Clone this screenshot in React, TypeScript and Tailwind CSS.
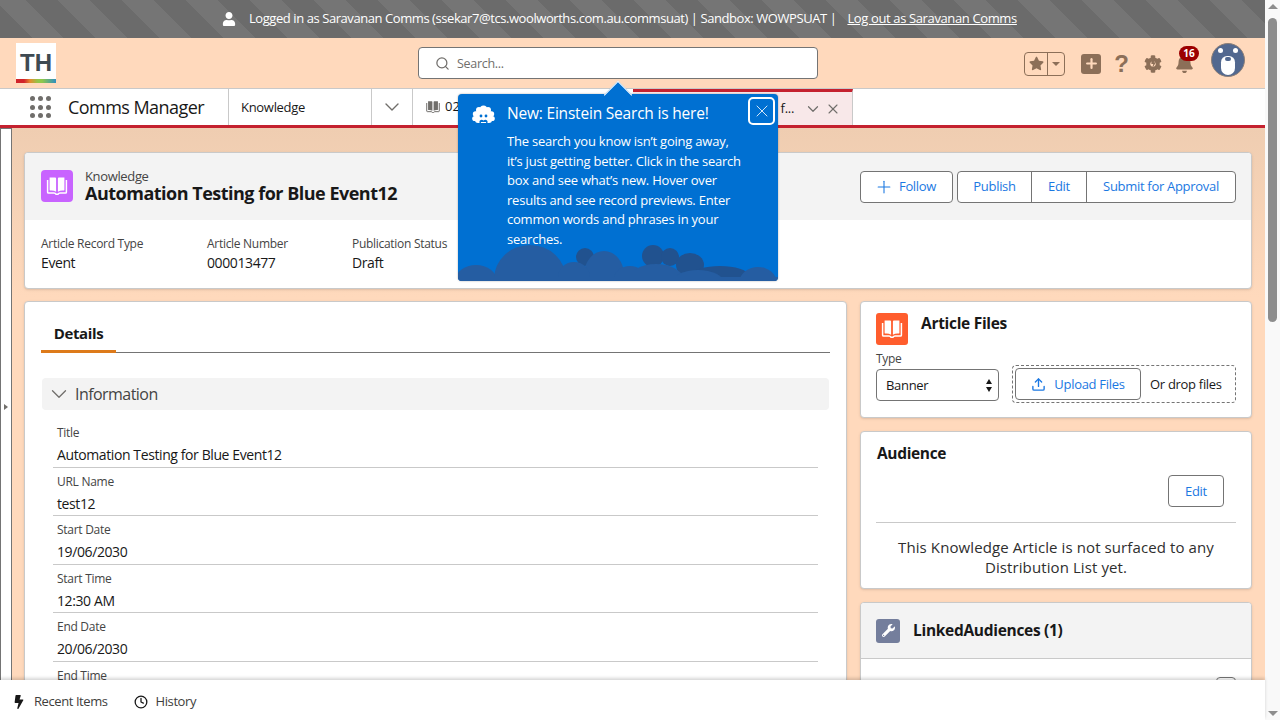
import React from "react";
import { Search, ChevronDown, X, Plus, Upload, Clock } from "lucide-react";
import { FaStar, FaBell, FaBolt, FaWrench, FaCog, FaUser } from "react-icons/fa";

function BookIcon({ size = 24 }: { size?: number }) {
  return (
    <svg width={size} height={size} viewBox="0 0 24 24" fill="none">
      <path d="M4.6 3.5h5.6c.5 0 .9.4.9.9v13.4c-1.4-.8-3-1.2-4.6-1.2H5.5a.9.9 0 0 1-.9-.9V3.5z" fill="currentColor" />
      <path d="M19.4 3.5h-5.6c-.5 0-.9.4-.9.9v13.4c1.4-.8 3-1.2 4.6-1.2h1c.5 0 .9-.4.9-.9V3.5z" fill="currentColor" />
      <path d="M2.6 6v12.2c0 .5.4.8.9.8H9c1 0 1.6.4 2 1.2h2c.4-.8 1-1.2 2-1.2h5.5c.5 0 .9-.3.9-.8V6" stroke="currentColor" strokeWidth="1.5" fill="none" />
    </svg>
  );
}

function Einstein() {
  return (
    <svg width="23" height="20" viewBox="0 0 23 20">
      <g fill="#fff">
        <circle cx="11.5" cy="4" r="3.6" />
        <circle cx="7" cy="5" r="3" />
        <circle cx="16" cy="5" r="3" />
        <circle cx="3.6" cy="9" r="2.8" />
        <circle cx="19.4" cy="9" r="2.8" />
        <circle cx="2.8" cy="13.5" r="2.6" />
        <circle cx="20.2" cy="13.5" r="2.6" />
        <rect x="3" y="6" width="17" height="12" rx="3" />
      </g>
      <circle cx="9" cy="11" r="1.4" fill="#0070d2" />
      <circle cx="14" cy="11" r="1.4" fill="#0070d2" />
      <path d="M7.5 16c1.4-1.6 2.8-1.3 4-.6 1.2-.7 2.6-1 4 .6v2h-1.4v-1h-5.2v1H7.5z" fill="#0070d2" />
    </svg>
  );
}

function Clouds() {
  return (
    <svg className="absolute bottom-0 left-0" width="320" height="40" viewBox="0 0 320 40">
      <g fill="#21528f">
        <circle cx="127" cy="16" r="9" />
        <circle cx="195" cy="15" r="11" />
        <circle cx="212" cy="16" r="9" />
        <ellipse cx="232" cy="24" rx="14" ry="12" />
        <ellipse cx="262" cy="34" rx="28" ry="9" />
      </g>
      <g fill="#255da2">
        <ellipse cx="18" cy="40" rx="21" ry="16" />
        <ellipse cx="72" cy="38" rx="36" ry="34" />
        <ellipse cx="146" cy="34" rx="20" ry="24" />
        <ellipse cx="116" cy="36" rx="16" ry="15" />
        <ellipse cx="172" cy="38" rx="16" ry="13" />
        <ellipse cx="198" cy="40" rx="28" ry="17" />
        <ellipse cx="240" cy="42" rx="26" ry="13" />
        <ellipse cx="300" cy="42" rx="19" ry="16" />
        <rect x="0" y="36" width="320" height="4" />
      </g>
    </svg>
  );
}

function Field({ label, value }: { label: string; value: string }) {
  return (
    <div className="h-[48.5px] px-1 border-b border-[#c9c9c9] flex flex-col">
      <span className="text-[12px] leading-[18px] text-[#444] mt-[5px] tracking-[-0.28px]">{label}</span>
      <span className="text-[14px] leading-[20px] text-[#181818] mt-[3px] tracking-[-0.4px]">{value}</span>
    </div>
  );
}

function Stat({ label, value, w }: { label: string; value: string; w: string }) {
  return (
    <div className={`${w} flex flex-col`}>
      <span className="text-[12px] leading-[18px] text-[#444] tracking-[-0.29px]">{label}</span>
      <span className="text-[14px] leading-[20px] text-[#181818] tracking-[-0.4px]">{value}</span>
    </div>
  );
}

export default function App() {
  return (
    <div className="relative h-screen w-full overflow-hidden flex font-['Open_Sans','Noto_Sans',sans-serif] text-[#181818] bg-[#ffd9bc]">
      <div className="flex-1 min-w-0 flex flex-col">
        {/* Login banner */}
        <div className="h-[38px] shrink-0 flex items-center bg-[#6c6c6c] bg-[repeating-linear-gradient(45deg,#6b6b6b_0,#6b6b6b_22.63px,#757575_22.63px,#757575_45.25px)] text-white text-[13px] pl-[222px]">
          <FaUser size={14} className="mr-[13px]" />
          <span className="tracking-[-0.43px]">Logged in as Saravanan Comms (ssekar7@tcs.woolworths.com.au.commsuat) | Sandbox: WOWPSUAT |</span>
          <span className="ml-[11px] underline tracking-[-0.37px]">Log out as Saravanan Comms</span>
        </div>

        {/* Global header */}
        <div className="h-[50px] shrink-0 bg-[#ffd9bc] flex items-center relative">
          <div className="ml-4 w-10 h-10 bg-white flex flex-col">
            <div className="flex-1 flex items-center justify-center pt-[3px] font-bold text-[24px] leading-none text-[#3e4a52] font-['Liberation_Sans',sans-serif]">TH</div>
            <div className="h-1 bg-[linear-gradient(90deg,#d1232a_0%,#d1232a_20%,#e58a2d_35%,#8fc74a_55%,#8fc74a_65%,#2f8fc0_100%)]" />
          </div>
          <div className="ml-[362px] w-[400px] h-8 bg-white border border-[#747474] rounded flex items-center pl-[16px] text-[12.5px] text-[#706e6b]">
            <Search size={15} className="text-[#706e6b] mr-[7px]" />
            <span className="tracking-[-0.3px] pt-[2px]">Search...</span>
          </div>
          <div className="ml-[206px] w-[41px] h-6 mt-[1px] border border-[#8c6f58] rounded flex items-center text-[#8c6f58]">
            <div className="w-[23px] h-full border-r border-[#8c6f58] flex items-center justify-center"><FaStar size={15} /></div>
            <div className="flex-1 flex items-center justify-center"><div className="w-0 h-0 border-l-[4px] border-r-[4px] border-t-[4px] border-l-transparent border-r-transparent border-t-[#8c6f58]" /></div>
          </div>
          <div className="ml-4 w-5 h-5 rounded-[3px] bg-[#8c6f58] flex items-center justify-center mt-[1px]">
            <Plus size={15} strokeWidth={3.5} className="text-[#ffd9bc]" />
          </div>
          <span className="ml-[10px] w-[21px] text-center text-[#8c6f58] font-bold text-[24px] leading-none mt-[1px] font-['Liberation_Sans',sans-serif]">?</span>
          <div className="ml-[12px] relative text-[#8c6f58] mt-[1px]">
            <FaCog size={18} />
            <FaBolt size={7} className="absolute left-[5.5px] top-[5.5px]" />
          </div>
          <div className="ml-[13px] relative text-[#8c6f58] mt-[1px]">
            <FaBell size={19} />
            <span className="absolute top-[-8px] left-[4px] w-5 h-[15px] rounded-full bg-[#9c0000] text-white text-[10px] font-bold leading-[15px] text-center">16</span>
          </div>
          <div className="ml-[17px] mt-[-6px] w-[34px] h-[34px] rounded-full bg-[#52688f] border border-[#8c7f78] relative overflow-hidden">
            <div className="absolute left-[6px] top-[4px] w-[5px] h-[5px] rounded-full bg-white" />
            <div className="absolute right-[6px] top-[4px] w-[5px] h-[5px] rounded-full bg-white" />
            <div className="absolute left-[9px] top-[12px] w-[14px] h-[19px] rounded-t-[7px] rounded-b-[8px] bg-white" />
            <div className="absolute left-[13px] top-[13px] w-[6px] h-[4px] rounded-full bg-[#52688f]" />
          </div>
        </div>

        {/* Nav bar */}
        <div className="h-[37px] shrink-0 bg-white border-t border-[#c9c9c9] flex items-stretch">
          <div className="w-[229px] shrink-0 flex items-center border-r border-[#c9c9c9]">
            <div className="ml-[30px] grid grid-cols-3 gap-x-[3px] gap-y-[3.5px]">
              {Array.from({ length: 9 }).map((_, i) => (
                <span key={i} className="w-[5px] h-[5px] rounded-full bg-[#706e6b]" />
              ))}
            </div>
            <span className="ml-[17px] text-[18px] tracking-[-0.55px] text-[#181818]">Comms Manager</span>
          </div>
          <div className="w-[143px] shrink-0 flex items-center pl-3 pt-px border-r border-[#c9c9c9] text-[13px] tracking-[-0.3px]">Knowledge</div>
          <div className="w-[41px] shrink-0 flex items-center justify-center border-r border-[#c9c9c9]"><ChevronDown size={24} strokeWidth={1.4} className="text-[#706e6b]" /></div>
          <div className="w-[220px] shrink-0 flex items-center pl-3 text-[13px] text-[#181818]">
            <span className="text-[#706e6b] mr-1 flex"><BookIcon size={16} /></span>02
          </div>
          <div className="w-[220px] shrink-0 flex items-center justify-end bg-[#f8e8e9] border-t-[3px] border-t-[#c4212f] border-r border-[#c9c9c9] text-[13px] pr-[11px]">
            <span className="mr-[10px] tracking-[-0.3px]">f...</span>
            <ChevronDown size={18} strokeWidth={1.6} className="text-[#706e6b] mr-[3px]" />
            <X size={16} strokeWidth={1.6} className="text-[#706e6b]" />
          </div>
        </div>
        <div className="h-[3px] shrink-0 bg-[#c4212f]" />

        {/* Body */}
        <div className="flex-1 min-h-0 flex items-stretch overflow-hidden bg-[linear-gradient(180deg,#efcdb1_0,#ffd9bc_170px)]">
          <div className="w-3 shrink-0 bg-white border-x border-[#747474] border-t relative flex items-center justify-center pt-[4px]">
            <div className="w-0 h-0 border-y-[3px] border-l-[4px] border-y-transparent border-l-[#706e6b]" />
          </div>
          <div className="flex-1 min-w-0 pl-3 pr-[13px] pt-6 flex flex-col gap-3">
            {/* Highlights */}
            <div className="h-[137px] shrink-0 rounded bg-white border border-[#c9c9c9] shadow-sm overflow-hidden flex flex-col">
              <div className="h-[67px] shrink-0 bg-[#f3f3f3] flex items-center pl-4 pr-[15px]">
                <div className="w-8 h-8 rounded bg-[#c863ff] text-white flex items-center justify-center mt-[-2px]"><BookIcon /></div>
                <div className="ml-3 flex flex-col flex-1 mt-[-3px]">
                  <span className="text-[13px] leading-[16px] tracking-[-0.35px] text-[#444] relative top-px">Knowledge</span>
                  <span className="text-[18px] leading-[20px] font-bold tracking-[-0.5px] text-[#181818]">Automation Testing for Blue Event12</span>
                </div>
                <div className="w-[93px] h-8 rounded border border-[#747474] bg-white flex items-center pl-[13px] text-[13px] text-[#1b78e2] tracking-[-0.33px]">
                  <Plus size={20} strokeWidth={1.3} className="mr-[5px]" /> Follow
                </div>
                <div className="ml-1 h-8 w-[279px] rounded border border-[#747474] bg-white flex items-center text-[13px] text-[#1b78e2] tracking-[-0.3px]">
                  <span className="w-[74px] h-full flex items-center justify-center border-r border-[#747474]">Publish</span>
                  <span className="w-[55px] h-full flex items-center justify-center border-r border-[#747474]">Edit</span>
                  <span className="flex-1 h-full flex items-center justify-center">Submit for Approval</span>
                </div>
              </div>
              <div className="flex pl-4 pt-[15px]">
                <Stat label="Article Record Type" value="Event" w="w-[166px]" />
                <Stat label="Article Number" value="000013477" w="w-[145px]" />
                <Stat label="Publication Status" value="Draft" w="w-[140px]" />
              </div>
            </div>

            <div className="flex-1 min-h-0 flex gap-[13px] items-start">
              {/* Details */}
              <div className="w-[823px] shrink-0 h-[400px] rounded bg-white border border-[#c9c9c9] shadow-sm pl-4 pr-4">
                <div className="h-[51px] border-b border-[#747474] flex items-end">
                  <div className="w-[75px] h-[36px] border-b-[3px] border-[#dd7a1a] mb-[-1px] text-center font-bold text-[15px] leading-[33px] tracking-[-0.38px]">Details</div>
                </div>
                <div className="mt-[25px] ml-px h-8 w-[787px] rounded bg-[#f3f3f3] flex items-center pl-[4px] text-[16px] text-[#444] tracking-[-0.55px]">
                  <ChevronDown size={26} strokeWidth={1.2} className="text-[#706e6b] mr-[3px]" /> Information
                </div>
                <div className="mt-[9px] ml-3 w-[765px] flex flex-col">
                  <Field label="Title" value="Automation Testing for Blue Event12" />
                  <Field label="URL Name" value="test12" />
                  <Field label="Start Date" value="19/06/2030" />
                  <Field label="Start Time" value="12:30 AM" />
                  <Field label="End Date" value="20/06/2030" />
                  <Field label="End Time" value="" />
                </div>
              </div>

              {/* Right column */}
              <div className="w-[392px] shrink-0 flex flex-col gap-[13px]">
                <div className="h-[117px] rounded bg-white border border-[#c9c9c9] shadow-sm px-[15px] pt-[11px]">
                  <div className="flex items-start">
                    <div className="w-8 h-8 rounded-[3px] bg-[#ff5d2d] text-white flex items-center justify-center"><BookIcon /></div>
                    <span className="ml-[13px] font-bold text-[15.5px] leading-5 tracking-[-0.3px]">Article Files</span>
                  </div>
                  <div className="flex mt-[6px]">
                    <div className="w-[123px] flex flex-col">
                      <span className="text-[12px] leading-[16px] text-[#444] tracking-[-0.3px]">Type</span>
                      <div className="mt-[2px] h-8 rounded border border-[#747474] flex items-center justify-between pl-[9px] pr-[6px] text-[13px] tracking-[-0.3px]">
                        <span className="pt-[2px]">Banner</span>
                        <span className="flex flex-col gap-[3px]">
                          <span className="w-0 h-0 border-x-[3px] border-b-[5px] border-x-transparent border-b-[#181818]" />
                          <span className="w-0 h-0 border-x-[3px] border-t-[5px] border-x-transparent border-t-[#181818]" />
                        </span>
                      </div>
                    </div>
                    <div className="ml-[13px] mt-[14px] w-[224px] h-[38px] border border-dashed border-[#747474] rounded flex items-center pl-[2px] text-[13px] tracking-[-0.3px]">
                      <div className="w-[126px] h-8 rounded border border-[#747474] flex items-center justify-center text-[#1b78e2]">
                        <Upload size={15} strokeWidth={2.2} className="mr-[8px]" /> <span className="pt-px">Upload Files</span>
                      </div>
                      <span className="ml-[9px] pt-px">Or drop files</span>
                    </div>
                  </div>
                </div>

                <div className="h-[158px] rounded bg-white border border-[#c9c9c9] shadow-sm px-[15px] pt-[11px]">
                  <div className="font-bold text-[15.5px] leading-5 tracking-[-0.35px] pl-px">Audience</div>
                  <div className="flex justify-end mt-[12px] pr-3">
                    <div className="w-14 h-8 rounded border border-[#747474] flex items-center justify-center pt-px text-[13px] text-[#1b78e2] tracking-[-0.3px]">Edit</div>
                  </div>
                  <div className="mt-[15px] border-t border-[#c9c9c9] pt-[15px] text-center text-[15px] leading-[19.5px] tracking-[0.1px] text-[#2e2e2e]">
                    This Knowledge Article is not surfaced to any<br />Distribution List yet.
                  </div>
                </div>

                <div className="h-[200px] rounded bg-white border border-[#c9c9c9] shadow-sm overflow-hidden">
                  <div className="h-[56px] bg-[#f3f3f3] border-b border-[#c9c9c9] flex items-center pl-[15px]">
                    <div className="w-6 h-6 rounded-[3px] bg-[#747e9c] text-white flex items-center justify-center"><FaWrench size={13} /></div>
                    <span className="ml-[13px] font-bold text-[15.5px] tracking-[-0.3px]">LinkedAudiences (1)</span>
                  </div>
                  <div className="flex justify-end pr-[15px] pt-[18px]">
                    <div className="w-5 h-6 rounded border border-[#747474]" />
                  </div>
                </div>
              </div>
            </div>
          </div>
        </div>

        {/* Utility bar */}
        <div className="h-10 shrink-0 bg-white shadow-[0_-2px_3px_rgba(0,0,0,0.16)] relative z-10 flex items-center pl-[12px] pt-[3px] text-[13px] text-[#3e3e3c] tracking-[-0.42px]">
          <FaBolt size={14} className="text-[#181818] mr-[8px]" />
          <span>Recent Items</span>
          <Clock size={14} strokeWidth={2.2} className="ml-[26px] mr-2 text-[#181818]" />
          <span>History</span>
        </div>
      </div>

      {/* Scrollbar */}
      <div className="w-[15px] shrink-0 bg-[#f9f9f9] relative flex flex-col items-center pt-1">
        <div className="w-0 h-0 border-x-[5px] border-b-[5px] border-x-transparent border-b-[#8d8d8d]" />
        <div className="mt-[9px] w-[9px] h-[304px] rounded-full bg-[#8d8d8d]" />
        <div className="absolute bottom-[4px] w-0 h-0 border-x-[5px] border-t-[5px] border-x-transparent border-t-[#8d8d8d]" />
      </div>

      {/* Einstein popover */}
      <div className="absolute left-[458px] top-[94px] w-[320px] h-[187px] rounded bg-[#0070d2] shadow-[0_0_2px_rgba(0,0,0,0.35)] text-white pl-[49px] pt-[7px]">
        <div className="absolute left-[146px] top-[-14px] w-[28px] h-[28px] overflow-hidden">
          <div className="absolute left-[4px] top-[5px] w-[20px] h-[20px] rotate-45 bg-[#0070d2] border-l border-t border-white" />
        </div>
        <div className="absolute inset-0 overflow-hidden rounded"><Clouds /></div>
        <div className="absolute left-[14px] top-[11px]"><Einstein /></div>
        <div className="absolute left-[290px] top-[3px] w-[27px] h-[28px] rounded-[5px] border-2 border-white flex items-center justify-center">
          <X size={20} strokeWidth={1.2} className="text-[#d5e7f7]" />
        </div>
        <div className="relative text-[15.5px] leading-[24px] tracking-[-0.2px]">New: Einstein Search is here!</div>
        <div className="relative mt-[7px] text-[13px] leading-[19.5px] tracking-[-0.22px] whitespace-nowrap">
          The search you know isn’t going away,<br />
          it’s just getting better. Click in the search<br />
          box and see what’s new. Hover over<br />
          results and see record previews. Enter<br />
          common words and phrases in your<br />
          searches.
        </div>
      </div>
    </div>
  );
}
